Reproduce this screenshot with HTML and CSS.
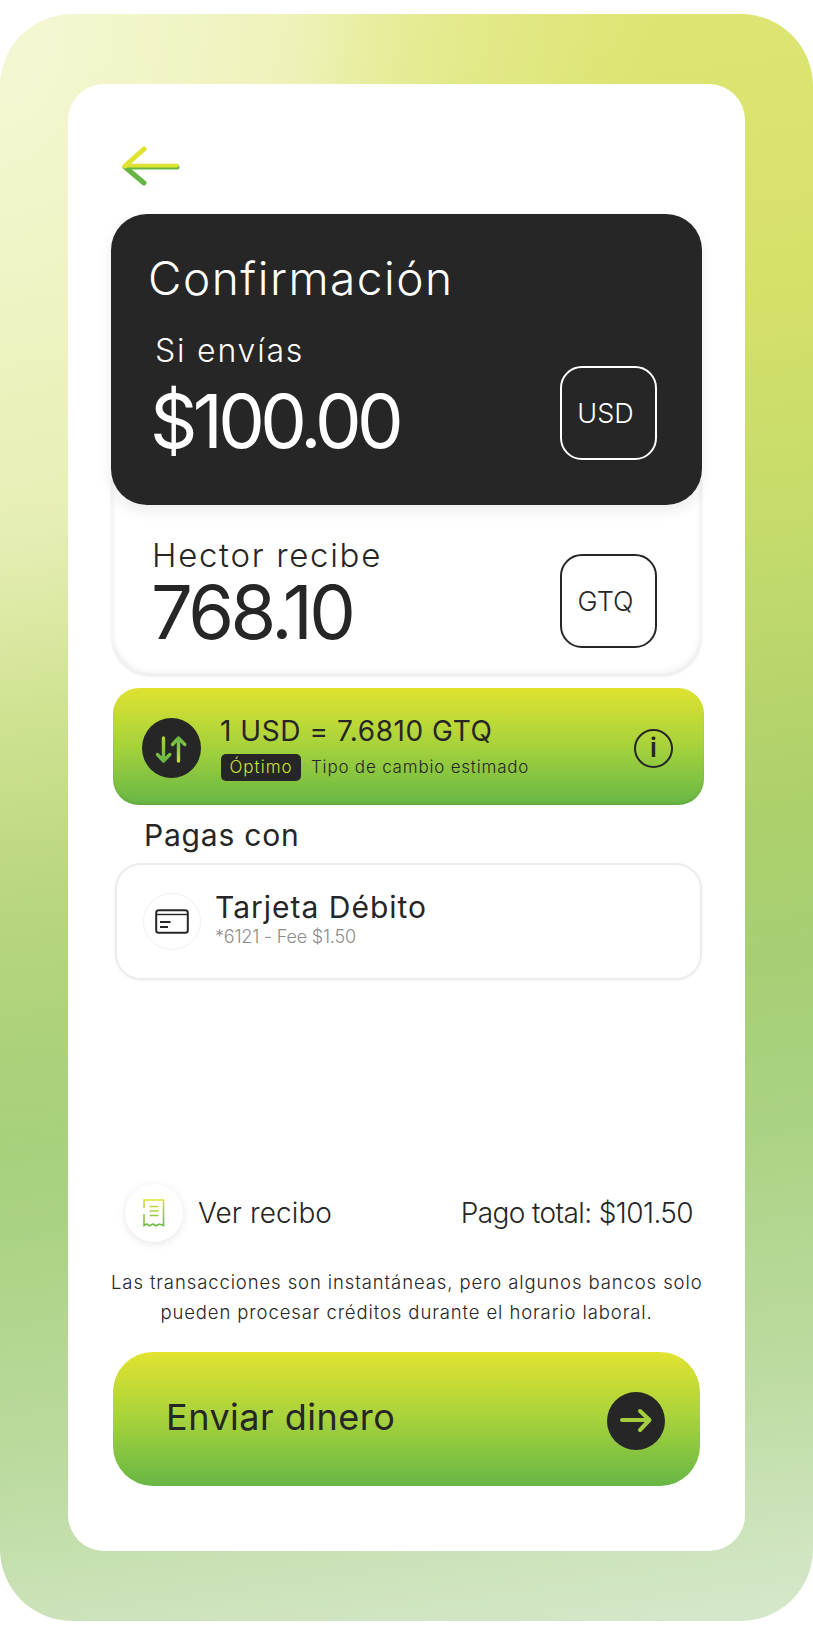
FILE: index.html
```html
<!DOCTYPE html>
<html lang="es">
<head>
<meta charset="utf-8">
<title>Confirmación</title>
<link rel="stylesheet" href="styles.css">
</head>
<body>
<div class="screen">
  <main class="panel">
    <a class="back" aria-label="Volver">
      <svg width="58" height="40" viewBox="0 0 58 40" fill="none" stroke-linecap="round" stroke-linejoin="round">
        <path d="M3 21 L22 37" stroke="#66b644" stroke-width="5"/>
        <path d="M4 21 H55" stroke="#66b644" stroke-width="5"/>
        <path d="M4 19.6 H55" stroke="#dfe22f" stroke-width="3.6"/>
        <path d="M3 20 L22 3" stroke="#dfe22f" stroke-width="5"/>
      </svg>
    </a>

    <section class="send-card">
      <h1 class="title">Confirmación</h1>
      <div class="amount-row">
        <div>
          <p class="label label-send">Si envías</p>
          <p class="amount amount-send">$100.00</p>
        </div>
        <div class="currency currency-light">USD</div>
      </div>
    </section>

    <section class="receive-card">
      <div>
        <p class="label label-receive">Hector recibe</p>
        <p class="amount amount-receive">768.10</p>
      </div>
      <div class="currency currency-dark">GTQ</div>
    </section>

    <section class="rate-card">
      <span class="rate-icon">
        <svg width="59" height="60" viewBox="0 0 59 60" fill="none" stroke-width="3.4" stroke-linecap="round" stroke-linejoin="round">
          <defs>
            <linearGradient id="down" x1="0" y1="0" x2="0" y2="1"><stop offset="0" stop-color="#a6d23c"/><stop offset="1" stop-color="#67b745"/></linearGradient>
            <linearGradient id="up" x1="0" y1="0" x2="0" y2="1"><stop offset="0" stop-color="#67b745"/><stop offset="1" stop-color="#c3dc35"/></linearGradient>
          </defs>
          <path d="M21.5 20 V43 M15.5 36.5 L21.5 43 L27.8 36.5" stroke="url(#down)"/>
          <path d="M36.5 43 V20 M30.5 26.5 L36.5 20 L42.8 26.5" stroke="url(#up)"/>
        </svg>
      </span>
      <div class="rate-text">
        <p class="rate-value">1 USD = 7.6810 GTQ</p>
        <p class="rate-note"><span class="badge">Óptimo</span><span class="note-text">Tipo de cambio estimado</span></p>
      </div>
      <span class="info">i</span>
    </section>

    <h2 class="pay-heading">Pagas con</h2>

    <section class="pay-card">
      <span class="pay-icon">
        <svg width="34" height="26" viewBox="0 0 34 26" fill="none" stroke="#262626">
          <rect x="1.2" y="1.2" width="31.6" height="22.6" rx="2.5" stroke-width="2"/>
          <path d="M1.5 5.5 H32.5" stroke-width="1.4"/>
          <path d="M5 13 H15.5 M5 18 H13" stroke-width="1.8"/>
        </svg>
      </span>
      <div class="pay-text">
        <p class="pay-title">Tarjeta Débito</p>
        <p class="pay-sub">*6121 - Fee $1.50</p>
      </div>
    </section>

    <div class="summary">
      <span class="receipt-icon">
        <svg width="22" height="28" viewBox="0 0 22 28" fill="none" stroke="url(#rcpt)" stroke-width="1.6">
          <defs>
            <linearGradient id="rcpt" gradientUnits="userSpaceOnUse" x1="0" y1="0" x2="0" y2="28"><stop offset="0" stop-color="#dfe22f"/><stop offset="1" stop-color="#67b745"/></linearGradient>
          </defs>
          <path d="M1 9 V1 H20.5 V26.5 L16.5 25 L13 26.8 L10 25 L6.5 26.8 L4 25 L1 26.5 V15"/>
          <path d="M6.5 7.5 H15.5 M6.5 12 H15.5 M6.5 16.5 H15.5"/>
        </svg>
      </span>
      <span class="receipt-link">Ver recibo</span>
      <span class="total">Pago total: $101.50</span>
    </div>

    <p class="disclaimer">Las transacciones son instantáneas, pero algunos bancos solo<br>pueden procesar créditos durante el horario laboral.</p>

    <button class="send-btn" type="button">
      <span class="send-label">Enviar dinero</span>
      <span class="send-icon">
        <svg width="58" height="58" viewBox="0 0 58 58" fill="none" stroke="#a5cf3d" stroke-width="4" stroke-linecap="round" stroke-linejoin="round">
          <path d="M15 28 H42 M33 19 L42.5 28 L33 38"/>
        </svg>
      </span>
    </button>
  </main>
</div>
</body>
</html>
```
FILE: styles.css
```css
* { box-sizing: border-box; }
html, body { margin: 0; padding: 0; background: #fff; }
body { width: 813px; height: 1635px; overflow: hidden; font-family: "Inter", "Liberation Sans", sans-serif; color: #262626; }
p, h1, h2 { margin: 0; font-weight: 400; white-space: nowrap; }

.screen {
  margin-top: 14px;
  width: 813px;
  height: 1607px;
  padding: 70px 68px;
  border-radius: 72px;
  background:
    radial-gradient(ellipse 650px 1150px at 0 0, rgba(255,255,255,.7) 0, rgba(255,255,255,.6) 24%, rgba(255,255,255,.5) 45%, rgba(255,255,255,.27) 60%, rgba(255,255,255,.15) 74%, rgba(255,255,255,0) 100%),
    linear-gradient(172deg, #dfe676 0, #dde572 6.6%, #d5e069 23%, #c2da6c 38%, #aed06b 52%, #a6cf74 61%, #aad282 70%, #bcdba0 85%, #cbe2b8 93%, #d6e8cc 100%);
}
.panel {
  width: 677px;
  height: 1467px;
  padding: 62px 0 0 43px;
  background: #fff;
  border-radius: 36px;
  display: flex;
  flex-direction: column;
  align-items: flex-start;
}
.back { display: block; height: 40px; margin-left: 11px; }

.send-card {
  position: relative;
  z-index: 2;
  width: 591px;
  height: 291px;
  margin-top: 28px;
  padding: 36px 45px 0 37px;
  background: #262626;
  color: #fff;
  border-radius: 36px;
  box-shadow: 0 6px 14px rgba(0,0,0,.08);
}
.title { font-size: 46px; line-height: 56px; font-weight: 350; letter-spacing: 1.5px; }
.amount-row { display: flex; justify-content: space-between; align-items: flex-end; margin-top: 26px; }
.label { font-weight: 350; }
.label-send { font-size: 32px; line-height: 38px; margin-left: 7px; letter-spacing: 1.8px; }
.amount { font-weight: 400; }
.amount-send { font-size: 74px; line-height: 84px; margin: 9px 0 0 2px; letter-spacing: -4.7px; }
.label-receive { font-size: 33px; line-height: 36px; letter-spacing: 1.7px; }
.amount-receive { font-size: 74px; line-height: 74px; margin: 2px 0 0 -1px; letter-spacing: -3.5px; }

.currency {
  width: 97px;
  height: 94px;
  padding-right: 6px;
  border-radius: 22px;
  display: flex;
  align-items: center;
  justify-content: center;
  font-size: 27px;
  font-weight: 350;
}
.currency-light { border: 2px solid #fff; color: #fff; margin-bottom: 3px; }
.currency-dark { border: 2px solid #262626; color: #262626; }

.receive-card {
  width: 591px;
  height: 196px;
  margin-top: -25px;
  padding: 57px 45px 0 41px;
  background: #fff;
  border-radius: 0 0 40px 40px;
  display: flex;
  justify-content: space-between;
  align-items: flex-start;
  box-shadow: inset 0 -4px 7px rgba(0,0,0,.06), inset 3px 0 5px rgba(0,0,0,.03), inset -3px 0 5px rgba(0,0,0,.03), 0 1px 3px rgba(0,0,0,.06);
}
.receive-card .currency { margin-top: 17px; }

.rate-card {
  width: 591px;
  height: 117px;
  margin: 12px 0 0 2px;
  padding: 3px 31px 0 29px;
  border-radius: 26px;
  background: linear-gradient(180deg, #dfe22f 0, #a6d23c 50%, #67b745 100%);
  box-shadow: inset 0 -2px 3px rgba(0,0,0,.08);
  display: flex;
  align-items: center;
}
.rate-icon { width: 59px; height: 60px; border-radius: 50%; background: #262626; flex: none; }
.rate-icon svg { display: block; }
.rate-text { margin-left: 19px; flex: 1; padding-bottom: 3px; }
.rate-value { font-size: 28px; line-height: 36px; font-weight: 400; letter-spacing: .55px; }
.rate-note { display: flex; align-items: center; margin-top: 5px; }
.badge { background: #262626; color: #cfe23a; border-radius: 5px; width: 80px; height: 27px; display: flex; align-items: center; justify-content: center; font-size: 17px; font-weight: 300; letter-spacing: 1px; margin-left: 1px; }
.note-text { font-size: 17px; font-weight: 300; margin-left: 10px; letter-spacing: .8px; }
.info { width: 39px; height: 39px; border: 2px solid #262626; border-radius: 50%; display: flex; align-items: center; justify-content: center; font-size: 26px; font-weight: 600; line-height: 1; flex: none; }

.pay-heading { font-size: 30px; line-height: 38px; margin: 11px 0 0 33px; letter-spacing: .8px; font-weight: 400; }

.pay-card {
  width: 587px;
  height: 117px;
  margin: 9px 0 0 4px;
  padding: 0 0 0 26px;
  border: 2px solid #ececec;
  border-radius: 26px;
  box-shadow: 0 1px 3px rgba(0,0,0,.05);
  display: flex;
  align-items: center;
}
.pay-icon { width: 58px; height: 57px; border-radius: 50%; border: 1px solid #f1f1f1; display: flex; align-items: center; justify-content: center; flex: none; }
.pay-icon svg { display: block; }
.pay-text { margin-left: 14px; padding-bottom: 7px; }
.pay-title { font-size: 30px; line-height: 36px; letter-spacing: 1px; }
.pay-sub { font-size: 18px; line-height: 22px; font-weight: 300; color: #8c8c8c; margin-top: 1px; letter-spacing: -.2px; }

.summary { width: 568px; height: 58px; margin: 204px 0 0 14px; display: flex; align-items: center; }
.receipt-icon { width: 58px; height: 58px; border-radius: 50%; background: #fff; box-shadow: 0 2px 8px rgba(0,0,0,.1); display: flex; align-items: center; justify-content: center; flex: none; }
.receipt-link { font-size: 28px; font-weight: 350; margin-left: 15px; letter-spacing: .1px; }
.total { font-size: 28px; font-weight: 350; margin-left: auto; letter-spacing: -.6px; }

.disclaimer { width: 591px; margin-top: 25px; font-size: 18.5px; line-height: 30px; font-weight: 300; text-align: center; letter-spacing: .89px; }

.send-btn {
  width: 587px;
  height: 134px;
  margin: 25px 0 0 2px;
  padding: 0 35px 0 53px;
  border: 0;
  border-radius: 40px;
  background: linear-gradient(180deg, #e2e32f 0, #a6d23c 50%, #67b745 100%);
  color: #262626;
  font-family: inherit;
  display: flex;
  align-items: center;
  justify-content: space-between;
}
.send-label { font-size: 36px; font-weight: 400; letter-spacing: .5px; padding-bottom: 4px; }
.send-icon { width: 58px; height: 58px; border-radius: 50%; background: #262626; flex: none; margin-top: 4px; }
.send-icon svg { display: block; }
```
